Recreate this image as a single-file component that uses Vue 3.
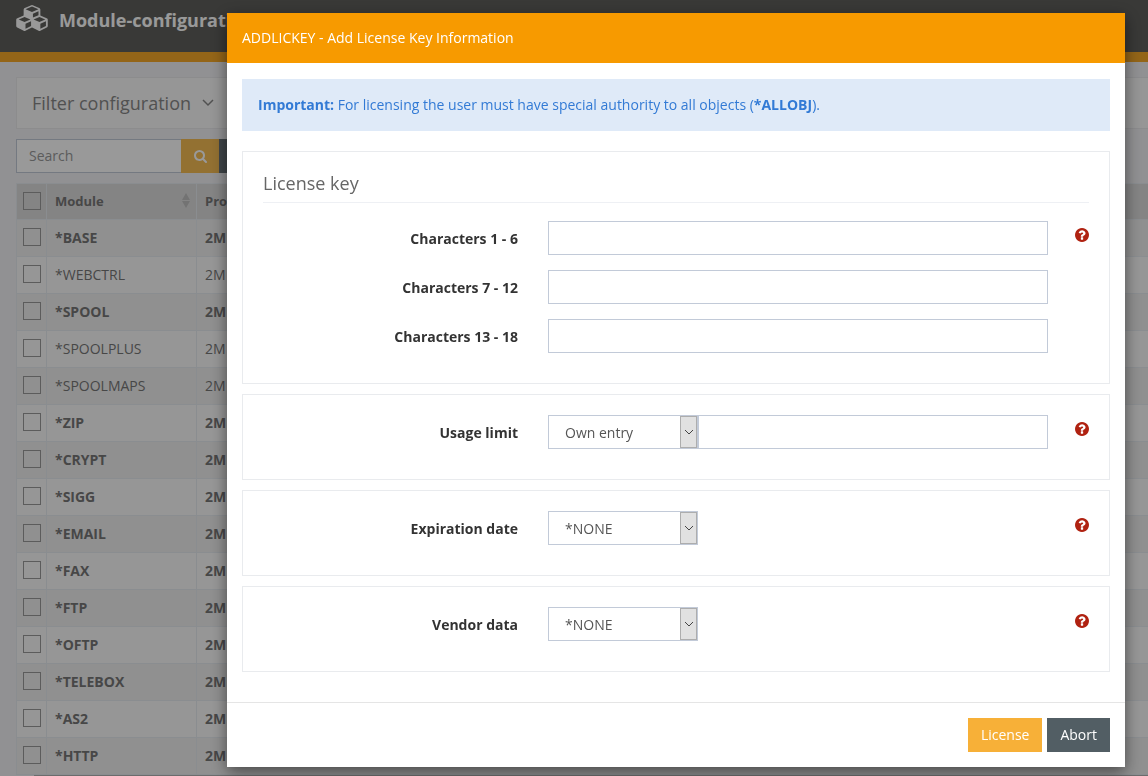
<script setup>
import { ref } from 'vue'

const modules = [
  { name: '*BASE', strong: true },
  { name: '*WEBCTRL', strong: false },
  { name: '*SPOOL', strong: true },
  { name: '*SPOOLPLUS', strong: false },
  { name: '*SPOOLMAPS', strong: false },
  { name: '*ZIP', strong: true },
  { name: '*CRYPT', strong: true },
  { name: '*SIGG', strong: true },
  { name: '*EMAIL', strong: true },
  { name: '*FAX', strong: true },
  { name: '*FTP', strong: true },
  { name: '*OFTP', strong: true },
  { name: '*TELEBOX', strong: true },
  { name: '*AS2', strong: true },
  { name: '*HTTP', strong: true },
]

const keyParts = [
  { id: 'key-1', label: 'Characters 1 - 6' },
  { id: 'key-2', label: 'Characters 7 - 12' },
  { id: 'key-3', label: 'Characters 13 - 18' },
]

const choices = [
  { id: 'usage', label: 'Usage limit', value: 'Own entry', entry: true },
  { id: 'expiration', label: 'Expiration date', value: '*NONE', entry: false },
  { id: 'vendor', label: 'Vendor data', value: '*NONE', entry: false },
]

const search = ref('')

const helpPath =
  'M1024 1376v-192q0-14-9-23t-23-9h-192q-14 0-23 9t-9 23v192q0 14 9 23t23 9h192q14 0 23-9t9-23zM1280 704q0-88-55.500-163t-138.500-116-170-41q-243 0-371 213-15 24 8 42l132 100q7 6 19 6 16 0 25-12 53-68 86-92 34-24 86-24 48 0 85.500 26t37.500 59q0 38-20 61t-68 45q-63 28-115.500 86.500t-52.500 125.500v36q0 14 9 23t23 9h192q14 0 23-9t9-23q0-19 21.500-49.500t54.500-49.500q32-18 49-28.500t46-35 44.500-48 28-60.500 12.500-81zM1664 896q0 209-103 385.500t-279.500 279.500-385.500 103-385.500-103-279.500-279.500-103-385.500 103-385.500 279.500-279.500 385.500-103 385.500 103 279.500 279.500 103 385.500z'
</script>

<template>
  <div class="page">
    <header class="topbar">
      <svg class="cubes" viewBox="0 0 2176 1792" aria-hidden="true">
        <path
          d="M512 1632l384-192v-314l-384 164v342zM448 1178l404-173-404-173-404 173zM1536 1632l384-192v-314l-384 164v342zM1472 1178l404-173-404-173-404 173zM1024 865l384-165v-266l-384 164v267zM960 486l441-189-441-189-441 189zM2048 1024v416q0 36-19 67t-52 47l-448 224q-25 14-57 14t-57-14l-448-224q-4-2-7-4-2 2-7 4l-448 224q-25 14-57 14t-57-14l-448-224q-33-16-52-47t-19-67v-416q0-38 21.500-70t56.500-48l434-186v-400q0-38 21.500-70t56.500-48l448-192q23-10 50-10t50 10l448 192q35 16 56.500 48t21.500 70v400l434 186q36 16 57 48t21 70z"
          transform="translate(128 0)"
        />
      </svg>
      <h1>Module-configuration</h1>
    </header>

    <main class="content">
      <section class="filter">
        <button type="button">
          Filter configuration
          <svg viewBox="0 0 12 8" aria-hidden="true"><path d="M1 1l5 5 5-5" /></svg>
        </button>
      </section>

      <div class="searchbar">
        <input v-model="search" type="text" placeholder="Search" aria-label="Search" />
        <button type="button" class="find" aria-label="Find">
          <svg viewBox="0 128 1664 1664" aria-hidden="true">
            <path d="M1152 832q0-185-131.500-316.500t-316.500-131.500-316.500 131.500-131.500 316.500 131.500 316.500 316.500 131.500 316.500-131.500 131.500-316.500zM1664 1664q0 52-38 90t-90 38q-54 0-90-38l-343-342q-179 124-399 124-143 0-273.500-55.500t-225-150-150-225-55.500-273.500 55.500-273.500 150-225 225-150 273.500-55.500 273.500 55.500 225 150 150 225 55.500 273.500q0 220-124 399l343 343q37 37 37 90z" />
          </svg>
        </button>
        <button type="button" class="reset" aria-label="Reset"></button>
      </div>

      <table>
        <colgroup>
          <col class="c-check" />
          <col class="c-module" />
          <col />
        </colgroup>
        <thead>
          <tr>
            <th class="check"><input type="checkbox" aria-label="Select all modules" /></th>
            <th>
              <div class="sortable">
                <span>Module</span>
                <svg viewBox="0 0 8 15" aria-hidden="true"><path d="M4 0l4 7H0zM0 8h8l-4 7z" /></svg>
              </div>
            </th>
            <th>Product</th>
          </tr>
        </thead>
        <tbody>
          <tr v-for="m in modules" :key="m.name" :class="{ strong: m.strong }">
            <td class="check"><input type="checkbox" :aria-label="m.name" /></td>
            <td>{{ m.name }}</td>
            <td>2M</td>
          </tr>
        </tbody>
      </table>
      <div class="scroll"></div>
    </main>
  </div>

  <div class="overlay">
    <form class="dialog" role="dialog" aria-labelledby="dialog-title" @submit.prevent>
      <header class="dialog-head">
        <h2 id="dialog-title">ADDLICKEY - Add License Key Information</h2>
      </header>

      <div class="dialog-body">
        <p class="notice">
          <strong>Important:</strong> For licensing the user must have special authority to all
          objects (<strong>*ALLOBJ</strong>).
        </p>

        <section class="panel">
          <h3>License key</h3>
          <div v-for="(part, i) in keyParts" :key="part.id" class="field">
            <label :for="part.id">{{ part.label }}</label>
            <input :id="part.id" class="text" type="text" />
            <button v-if="i === 0" type="button" class="help" aria-label="Help">
              <svg viewBox="128 128 1536 1536" aria-hidden="true"><path :d="helpPath" /></svg>
            </button>
          </div>
        </section>

        <section v-for="c in choices" :key="c.id" class="panel">
          <div class="field">
            <label :for="c.id">{{ c.label }}</label>
            <div class="group">
              <div class="picker">
                <select :id="c.id">
                  <option>{{ c.value }}</option>
                </select>
                <span class="arrow">
                  <svg viewBox="0 0 10 6" aria-hidden="true"><path d="M1 1l4 4 4-4" /></svg>
                </span>
              </div>
              <input v-if="c.entry" class="text" type="text" :aria-label="c.label" />
            </div>
            <button type="button" class="help" aria-label="Help">
              <svg viewBox="128 128 1536 1536" aria-hidden="true"><path :d="helpPath" /></svg>
            </button>
          </div>
        </section>
      </div>

      <footer class="dialog-foot">
        <button type="submit" class="license">License</button>
        <button type="button" class="abort">Abort</button>
      </footer>
    </form>
  </div>
</template>

<style>
body {
  background: #f2f2f5;
  font-family: "Open Sans", "Noto Sans", sans-serif;
  font-size: 14px;
  overflow: hidden;
}
</style>

<style scoped>
* {
  box-sizing: border-box;
}
h1,
h2,
h3,
p {
  margin: 0;
}
button,
input,
select {
  font: inherit;
  margin: 0;
  border-radius: 0;
}
button {
  border: 0;
  padding: 0;
}
svg {
  display: block;
  flex: none;
}

/* Page behind the dialog */
.page {
  height: 100vh;
  overflow: hidden;
  color: #777;
}
.topbar {
  height: 62px;
  border-bottom: 10px solid #f7a928;
  background: #5f5f5c;
  display: flex;
  align-items: flex-start;
  gap: 11px;
  padding: 5px 16px 0;
}
.cubes {
  width: 32px;
  height: 26px;
  fill: #fff;
}
h1 {
  font-size: 18px;
  line-height: 30px;
  font-weight: 700;
  color: #fff;
}
.content {
  padding: 15px 0 0 16px;
}
.filter {
  height: 52px;
  border: 1px solid #e9e9ec;
  border-right: 0;
  background: #fafafa;
  display: flex;
  padding-left: 15px;
}
.filter button {
  display: flex;
  align-items: center;
  gap: 11px;
  background: none;
  font-size: 18px;
  color: #888;
}
.filter svg {
  width: 12px;
  height: 8px;
  fill: none;
  stroke: #888;
  stroke-width: 1.5;
}
.searchbar {
  display: flex;
  height: 34px;
  margin: 10px 0;
}
.searchbar input {
  width: 165px;
  border: 1px solid #c2cad8;
  border-right: 0;
  background: #fff;
  padding: 0 12px 2px;
}
.searchbar input::placeholder {
  color: #999;
  opacity: 1;
}
.find {
  width: 38px;
  background: #f5bc54;
  display: grid;
  place-items: center;
}
.find svg {
  width: 13px;
  height: 13px;
  fill: #fff;
}
.reset {
  width: 38px;
  background: #6a7379;
}
table {
  width: 100%;
  table-layout: fixed;
  border-collapse: collapse;
}
.c-check {
  width: 30px;
}
.c-module {
  width: 150px;
}
th,
td {
  height: 37px;
  padding: 0 8px;
  border: 1px solid #e7ecf1;
  text-align: left;
  line-height: 18px;
}
th {
  height: 36px;
  padding-bottom: 2px;
  background: #ddd;
  font-size: 13px;
  font-weight: 700;
}
tr > :last-child {
  border-right: 0;
}
td {
  background: #fbfbfb;
}
tbody tr:nth-child(odd) td {
  background: #f0f0f0;
}
.strong td {
  font-weight: 700;
}
.check {
  padding: 0 6px 2px;
}
.check input {
  appearance: none;
  display: block;
  width: 18px;
  height: 18px;
  border: 1px solid #999;
}
.sortable {
  display: flex;
  align-items: center;
  justify-content: space-between;
  margin-right: -2px;
}
.sortable svg {
  width: 8px;
  height: 15px;
  fill: #c0c0c0;
}
.scroll {
  height: 10px;
  margin-left: 18px;
  background: #b5b5b5;
}

/* Dialog */
.overlay {
  position: fixed;
  inset: 0;
  background: rgba(0, 0, 0, 0.4);
  padding: 13px 23px 9px 227px;
}
.dialog {
  background: #fff;
  box-shadow: 0 5px 15px rgba(0, 0, 0, 0.5);
  color: #333;
}
.dialog-head {
  background: #f79a00;
  padding: 15px;
}
h2 {
  font-size: 14px;
  line-height: 20px;
  font-weight: 400;
  color: #fff;
}
.dialog-body {
  padding: 16px 15px 30px;
}
.notice {
  margin-bottom: 20px;
  padding: 16px;
  background: #dfeaf8;
  color: #327ad5;
  line-height: 20px;
}
.notice strong {
  font-weight: 700;
}
.panel {
  border: 1px solid #e9ebee;
  padding: 20px 20px 30px;
}
.panel + .panel {
  margin-top: 10px;
}
h3 {
  height: 31px;
  margin-bottom: 18px;
  border-bottom: 1px solid #eef0f4;
  font-size: 18px;
  line-height: 22px;
  font-weight: 400;
  color: #666;
}
.field {
  display: grid;
  grid-template-columns: minmax(0, 255fr) minmax(0, 557fr) 14px;
}
.field + .field {
  margin-top: 15px;
}
.field label {
  font-weight: 700;
  line-height: 36px;
  height: 34px;
  text-align: right;
}
.field > .text,
.group {
  margin: 0 27px 0 30px;
}
.text {
  height: 34px;
  min-width: 0;
  border: 1px solid #c2cad8;
  background: #fff;
  padding: 0 12px;
  color: #555;
}
.group {
  display: flex;
}
.group .text {
  flex: 1;
}
.picker {
  display: flex;
  position: relative;
  width: 150px;
  height: 34px;
}
.picker select {
  appearance: none;
  width: 100%;
  border: 1px solid #c2cad8;
  background: #fff;
  padding: 1px 20px 0 16px;
  color: #555;
}
.arrow {
  position: absolute;
  top: 1px;
  right: 1px;
  bottom: 1px;
  width: 17px;
  border: 1px solid #adadad;
  background: #e1e1e1;
  display: grid;
  place-items: center;
  pointer-events: none;
}
.arrow svg {
  width: 10px;
  height: 6px;
  fill: none;
  stroke: #444;
}
.help {
  align-self: start;
  margin-top: 7px;
  background: none;
}
.help svg {
  width: 14px;
  height: 14px;
  fill: #b02211;
}
.dialog-foot {
  border-top: 1px solid #e5e5e5;
  padding: 15px;
  display: flex;
  justify-content: flex-end;
  gap: 5px;
}
.dialog-foot button {
  height: 34px;
  padding: 0 13px 2px;
  color: #fff;
}
.license {
  background: #f7b038;
}
.abort {
  background: #525e64;
}
</style>
